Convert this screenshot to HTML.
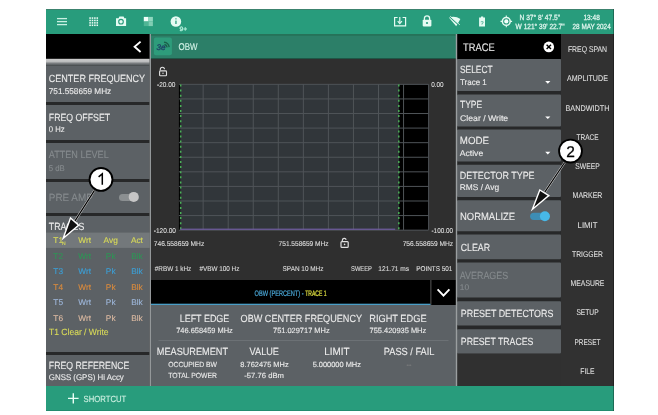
<!DOCTYPE html>
<html><head><meta charset="utf-8"><style>
html,body{margin:0;padding:0;background:#fff;width:658px;height:415px;overflow:hidden}
svg{display:block;will-change:transform}
text{font-family:"Liberation Sans", sans-serif;white-space:pre;text-rendering:geometricPrecision}
</style></head><body>
<svg width="658" height="415" viewBox="0 0 658 415">
<rect x="46" y="9" width="568" height="402" fill="#303030" />
<rect x="46" y="9" width="568" height="25" fill="#289c7c" />
<rect x="46" y="386" width="568" height="25" fill="#289c7c" />
<rect x="57" y="17.950000000000003" width="10" height="1.3" fill="#c9f0e2" />
<rect x="57" y="20.950000000000003" width="10" height="1.3" fill="#c9f0e2" />
<rect x="57" y="23.950000000000003" width="10" height="1.3" fill="#c9f0e2" />
<rect x="89.3" y="17.3" width="1.55" height="1.55" fill="#eefcf6" />
<rect x="89.3" y="19.7" width="1.55" height="1.55" fill="#eefcf6" />
<rect x="89.3" y="22.1" width="1.55" height="1.55" fill="#eefcf6" />
<rect x="89.3" y="24.5" width="1.55" height="1.55" fill="#eefcf6" />
<rect x="91.7" y="17.3" width="1.55" height="1.55" fill="#eefcf6" />
<rect x="91.7" y="19.7" width="1.55" height="1.55" fill="#eefcf6" />
<rect x="91.7" y="22.1" width="1.55" height="1.55" fill="#eefcf6" />
<rect x="91.7" y="24.5" width="1.55" height="1.55" fill="#eefcf6" />
<rect x="94.1" y="17.3" width="1.55" height="1.55" fill="#eefcf6" />
<rect x="94.1" y="19.7" width="1.55" height="1.55" fill="#eefcf6" />
<rect x="94.1" y="22.1" width="1.55" height="1.55" fill="#eefcf6" />
<rect x="94.1" y="24.5" width="1.55" height="1.55" fill="#eefcf6" />
<rect x="96.5" y="17.3" width="1.55" height="1.55" fill="#eefcf6" />
<rect x="96.5" y="19.7" width="1.55" height="1.55" fill="#eefcf6" />
<rect x="96.5" y="22.1" width="1.55" height="1.55" fill="#eefcf6" />
<rect x="96.5" y="24.5" width="1.55" height="1.55" fill="#eefcf6" />
<path d="M116,18.3 h2.6 l0.8,-1.8 h4.2 l0.8,1.8 h1.7 v7.8 h-10.1 z" fill="#e6fbf3"/>
<circle cx="121" cy="21.7" r="2.3" fill="none" stroke="#289c7c" stroke-width="1.1"/>
<rect x="143.8" y="16.9" width="4.7" height="4.6" fill="#f2fffa" />
<rect x="148.5" y="16.9" width="4.4" height="4.6" fill="#8fd8bf" />
<rect x="143.8" y="21.5" width="4.7" height="4.6" fill="#4fb594" />
<rect x="148.5" y="21.5" width="4.4" height="4.6" fill="#7fceb3" />
<circle cx="175.9" cy="21.5" r="5.3" fill="#e6fbf3"/>
<rect x="175.3" y="18.3" width="1.3" height="1.1" fill="#289c7c" />
<rect x="175.3" y="20.6" width="1.3" height="3.4" fill="#289c7c" />
<text x="179.6" y="30.9" font-size="6.3" fill="#b5efdc" text-anchor="start" textLength="7.6" lengthAdjust="spacingAndGlyphs" stroke="#b5efdc" stroke-width="0.3" >9+</text>
<path d="M397.6,17.5 h-3 v8.4 h11 v-8.4 h-3" fill="none" stroke="#e6fbf3" stroke-width="1.2"/>
<path d="M399.8,17 v5.8" stroke="#e6fbf3" stroke-width="1.2"/>
<path d="M397.7,21.2 l2.1,2.4 l2.1,-2.4" fill="none" stroke="#e6fbf3" stroke-width="1.2"/>
<path d="M424.4,20 v-1.6 a2.6,2.6 0 0 1 5.2,0 v1.6" fill="none" stroke="#e6fbf3" stroke-width="1.3"/>
<rect x="422.7" y="19.7" width="8.7" height="6.7" rx="0.8" fill="#e6fbf3"/>
<circle cx="427" cy="23" r="1.1" fill="#289c7c"/>
<path d="M448.8,17.6 Q454.8,15.2 460.4,19 L456.2,26.2 Z" fill="#e6fbf3"/>
<path d="M449.2,16.4 L459.4,25.6" stroke="#289c7c" stroke-width="1.1"/>
<path d="M450.2,16.2 L459.9,24.9" stroke="#e6fbf3" stroke-width="0.8"/>
<path d="M481,17.6 v-1.2 h2.2 v1.2 h1.8 v8.8 h-5.9 v-8.8 z" fill="#e6fbf3"/>
<text x="482" y="25" font-size="5.5" fill="#289c7c" text-anchor="middle" stroke="#289c7c" stroke-width="0.12" >?</text>
<circle cx="506.3" cy="21.4" r="3.9" fill="none" stroke="#e6fbf3" stroke-width="1.5"/>
<circle cx="506.3" cy="21.4" r="2.1" fill="#f4fffb"/>
<path d="M506.3,15.6 v1.8 M506.3,25.4 v1.8 M500.5,21.4 h1.8 M510.3,21.4 h1.8" stroke="#e6fbf3" stroke-width="1.1"/>
<text x="519.5" y="19.5" font-size="7.5" fill="#e3f7f0" text-anchor="start" textLength="40.6" lengthAdjust="spacingAndGlyphs" stroke="#e3f7f0" stroke-width="0.25" >N 37° 8' 47.5"</text>
<text x="515.6" y="29" font-size="7.5" fill="#e3f7f0" text-anchor="start" textLength="49" lengthAdjust="spacingAndGlyphs" stroke="#e3f7f0" stroke-width="0.25" >W 121° 39' 22.7"</text>
<text x="583.4" y="19.5" font-size="7.5" fill="#e3f7f0" text-anchor="start" textLength="16.4" lengthAdjust="spacingAndGlyphs" stroke="#e3f7f0" stroke-width="0.25" >13:48</text>
<text x="572.5" y="29" font-size="7.5" fill="#e3f7f0" text-anchor="start" textLength="38.2" lengthAdjust="spacingAndGlyphs" stroke="#e3f7f0" stroke-width="0.25" >28 MAY 2024</text>
<rect x="46" y="34" width="104" height="25" fill="#000" />
<path d="M140.6,41.6 L134.6,46.8 L140.6,52" fill="none" stroke="#fff" stroke-width="1.9"/>
<defs><linearGradient id="lg" x1="0" y1="0" x2="0" y2="1"><stop offset="0" stop-color="#cdcdcd"/><stop offset="0.4" stop-color="#bdbebf"/><stop offset="0.75" stop-color="#6a6e71"/><stop offset="1" stop-color="#53585b"/></linearGradient></defs>
<rect x="46" y="63" width="104" height="323" fill="#272829" />
<rect x="46" y="58.8" width="103.6" height="6.8" fill="url(#lg)" />
<rect x="46" y="65.6" width="103.5" height="36.400000000000006" fill="#5c6165" />
<rect x="46" y="105" width="103.5" height="35" fill="#5c6165" />
<rect x="46" y="143" width="103.5" height="36" fill="#5c6165" />
<rect x="46" y="182" width="103.5" height="31" fill="#5c6165" />
<rect x="46" y="216" width="103.5" height="136" fill="#5c6165" />
<rect x="46" y="355" width="103.5" height="31" fill="#5c6165" />
<text x="48.8" y="82.1" font-size="10.4" fill="#ebebeb" text-anchor="start" textLength="96.3" lengthAdjust="spacingAndGlyphs" stroke="#ebebeb" stroke-width="0.12" >CENTER FREQUENCY</text>
<text x="48.8" y="93.7" font-size="8.3" fill="#ebebeb" text-anchor="start" textLength="62.4" lengthAdjust="spacingAndGlyphs" stroke="#ebebeb" stroke-width="0.12" >751.558659 MHz</text>
<text x="48.8" y="120.8" font-size="10.4" fill="#ebebeb" text-anchor="start" textLength="61.3" lengthAdjust="spacingAndGlyphs" stroke="#ebebeb" stroke-width="0.12" >FREQ OFFSET</text>
<text x="48.8" y="131.8" font-size="8.3" fill="#ebebeb" text-anchor="start" textLength="15.8" lengthAdjust="spacingAndGlyphs" stroke="#ebebeb" stroke-width="0.12" >0 Hz</text>
<text x="48.8" y="158.4" font-size="10.4" fill="#858a8d" text-anchor="start" textLength="59.9" lengthAdjust="spacingAndGlyphs" stroke="#858a8d" stroke-width="0.12" >ATTEN LEVEL</text>
<text x="48.8" y="170.8" font-size="8.3" fill="#858a8d" text-anchor="start" textLength="16" lengthAdjust="spacingAndGlyphs" stroke="#858a8d" stroke-width="0.12" >5 dB</text>
<text x="48.8" y="200.6" font-size="10.4" fill="#858a8d" text-anchor="start" textLength="44" lengthAdjust="spacingAndGlyphs" stroke="#858a8d" stroke-width="0.12" >PRE AMP</text>
<rect x="119" y="193.9" width="19.8" height="7.2" rx="3.6" fill="#8b8f91"/>
<circle cx="133.7" cy="196.9" r="5" fill="#c6c6c6"/>
<text x="48.8" y="229.5" font-size="10.4" fill="#ebebeb" text-anchor="start" textLength="35.5" lengthAdjust="spacingAndGlyphs" stroke="#ebebeb" stroke-width="0.12" >TRACES</text>
<rect x="46" y="232.6" width="103.5" height="15.3" fill="#73787b" />
<text x="58.2" y="242.9" font-size="8.3" fill="#d8da58" text-anchor="middle" stroke="#d8da58" stroke-width="0.12" >T1</text>
<text x="84.7" y="242.9" font-size="8.3" fill="#d8da58" text-anchor="middle" stroke="#d8da58" stroke-width="0.12" >Wrt</text>
<text x="110.7" y="242.9" font-size="8.3" fill="#d8da58" text-anchor="middle" stroke="#d8da58" stroke-width="0.12" >Avg</text>
<text x="136.9" y="242.9" font-size="8.3" fill="#d8da58" text-anchor="middle" stroke="#d8da58" stroke-width="0.12" >Act</text>
<text x="58.2" y="258.5" font-size="8.3" fill="#2f9556" text-anchor="middle" stroke="#2f9556" stroke-width="0.12" >T2</text>
<text x="84.7" y="258.5" font-size="8.3" fill="#2f9556" text-anchor="middle" stroke="#2f9556" stroke-width="0.12" >Wrt</text>
<text x="110.7" y="258.5" font-size="8.3" fill="#2f9556" text-anchor="middle" stroke="#2f9556" stroke-width="0.12" >Pk</text>
<text x="136.9" y="258.5" font-size="8.3" fill="#2f9556" text-anchor="middle" stroke="#2f9556" stroke-width="0.12" >Blk</text>
<text x="58.2" y="274" font-size="8.3" fill="#3c9fd6" text-anchor="middle" stroke="#3c9fd6" stroke-width="0.12" >T3</text>
<text x="84.7" y="274" font-size="8.3" fill="#3c9fd6" text-anchor="middle" stroke="#3c9fd6" stroke-width="0.12" >Wrt</text>
<text x="110.7" y="274" font-size="8.3" fill="#3c9fd6" text-anchor="middle" stroke="#3c9fd6" stroke-width="0.12" >Pk</text>
<text x="136.9" y="274" font-size="8.3" fill="#3c9fd6" text-anchor="middle" stroke="#3c9fd6" stroke-width="0.12" >Blk</text>
<text x="58.2" y="289.7" font-size="8.3" fill="#db8b3d" text-anchor="middle" stroke="#db8b3d" stroke-width="0.12" >T4</text>
<text x="84.7" y="289.7" font-size="8.3" fill="#db8b3d" text-anchor="middle" stroke="#db8b3d" stroke-width="0.12" >Wrt</text>
<text x="110.7" y="289.7" font-size="8.3" fill="#db8b3d" text-anchor="middle" stroke="#db8b3d" stroke-width="0.12" >Pk</text>
<text x="136.9" y="289.7" font-size="8.3" fill="#db8b3d" text-anchor="middle" stroke="#db8b3d" stroke-width="0.12" >Blk</text>
<text x="58.2" y="305.4" font-size="8.3" fill="#9db6d9" text-anchor="middle" stroke="#9db6d9" stroke-width="0.12" >T5</text>
<text x="84.7" y="305.4" font-size="8.3" fill="#9db6d9" text-anchor="middle" stroke="#9db6d9" stroke-width="0.12" >Wrt</text>
<text x="110.7" y="305.4" font-size="8.3" fill="#9db6d9" text-anchor="middle" stroke="#9db6d9" stroke-width="0.12" >Pk</text>
<text x="136.9" y="305.4" font-size="8.3" fill="#9db6d9" text-anchor="middle" stroke="#9db6d9" stroke-width="0.12" >Blk</text>
<text x="58.2" y="320.7" font-size="8.3" fill="#dbb9a1" text-anchor="middle" stroke="#dbb9a1" stroke-width="0.12" >T6</text>
<text x="84.7" y="320.7" font-size="8.3" fill="#dbb9a1" text-anchor="middle" stroke="#dbb9a1" stroke-width="0.12" >Wrt</text>
<text x="110.7" y="320.7" font-size="8.3" fill="#dbb9a1" text-anchor="middle" stroke="#dbb9a1" stroke-width="0.12" >Pk</text>
<text x="136.9" y="320.7" font-size="8.3" fill="#dbb9a1" text-anchor="middle" stroke="#dbb9a1" stroke-width="0.12" >Blk</text>
<text x="61.9" y="244.9" font-size="5" fill="#d8da58" text-anchor="start" stroke="#d8da58" stroke-width="0.12" >N</text>
<text x="49" y="334.5" font-size="9" fill="#d8da58" text-anchor="start" textLength="59.6" lengthAdjust="spacingAndGlyphs" stroke="#d8da58" stroke-width="0.12" >T1 Clear / Write</text>
<text x="48.8" y="368.5" font-size="10.4" fill="#ebebeb" text-anchor="start" textLength="80.6" lengthAdjust="spacingAndGlyphs" stroke="#ebebeb" stroke-width="0.12" >FREQ REFERENCE</text>
<text x="48.8" y="380.1" font-size="8.3" fill="#ebebeb" text-anchor="start" textLength="75" lengthAdjust="spacingAndGlyphs" stroke="#ebebeb" stroke-width="0.12" >GNSS (GPS) Hi Accy</text>
<rect x="151" y="34" width="305.5" height="25" fill="#2c7f68" />
<rect x="151" y="34" width="305.5" height="1.8" fill="#267259" />
<rect x="151" y="58" width="305.5" height="1.8" fill="#1f5646" />
<rect x="153.9" y="37.6" width="18" height="17.7" rx="2" fill="#2e9c7b"/>
<text x="156.4" y="50.4" font-size="8.2" fill="#1f3f66" text-anchor="start" textLength="9" lengthAdjust="spacingAndGlyphs" stroke="#1f3f66" stroke-width="0.3" font-style="italic">3e</text>
<path d="M164,42.2 a6,6 0 0 1 5.2,5 M164.4,44.5 a3.6,3.6 0 0 1 2.8,2.8" fill="none" stroke="#1b5e4a" stroke-width="1.3"/>
<text x="178.6" y="50.4" font-size="9.8" fill="#d5f3e8" text-anchor="start" textLength="19" lengthAdjust="spacingAndGlyphs" stroke="#d5f3e8" stroke-width="0.12" >OBW</text>
<rect x="151" y="59" width="305.5" height="221" fill="#2f2f2f" />
<path d="M160.3,70.3 v-1 a2.1,2.1 0 0 1 4.2,0" fill="none" stroke="#e0e0e0" stroke-width="1.1"/>
<rect x="159.6" y="70.9" width="6.9" height="4.8" rx="0.8" fill="none" stroke="#e0e0e0" stroke-width="1.1"/>
<circle cx="163" cy="73.3" r="0.7" fill="#e0e0e0"/>
<rect x="178.9" y="84.2" width="250" height="145.8" fill="#000" />
<rect x="180.2" y="84.2" width="219" height="145.8" fill="#31363a" />
<rect x="202.65" y="84.2" width="1.0" height="145.8" fill="#4f5458" />
<rect x="227.7" y="84.2" width="1.0" height="145.8" fill="#4f5458" />
<rect x="252.75" y="84.2" width="1.0" height="145.8" fill="#4f5458" />
<rect x="277.8" y="84.2" width="1.0" height="145.8" fill="#4f5458" />
<rect x="302.85" y="84.2" width="1.0" height="145.8" fill="#4f5458" />
<rect x="327.9" y="84.2" width="1.0" height="145.8" fill="#4f5458" />
<rect x="352.95" y="84.2" width="1.0" height="145.8" fill="#4f5458" />
<rect x="378.0" y="84.2" width="1.0" height="145.8" fill="#4f5458" />
<rect x="403.05" y="84.2" width="1.0" height="145.8" fill="#4f5458" />
<rect x="428.1" y="84.2" width="1.0" height="145.8" fill="#4f5458" />
<rect x="178.9" y="83.85" width="249.6" height="1.0" fill="#4f5458" />
<rect x="178.9" y="98.43" width="249.6" height="1.0" fill="#4f5458" />
<rect x="178.9" y="113.01" width="249.6" height="1.0" fill="#4f5458" />
<rect x="178.9" y="127.59" width="249.6" height="1.0" fill="#4f5458" />
<rect x="178.9" y="142.17" width="249.6" height="1.0" fill="#4f5458" />
<rect x="178.9" y="156.75" width="249.6" height="1.0" fill="#4f5458" />
<rect x="178.9" y="171.33" width="249.6" height="1.0" fill="#4f5458" />
<rect x="178.9" y="185.91" width="249.6" height="1.0" fill="#4f5458" />
<rect x="178.9" y="200.49" width="249.6" height="1.0" fill="#4f5458" />
<rect x="178.9" y="215.07" width="249.6" height="1.0" fill="#4f5458" />
<rect x="178.9" y="229.65" width="249.6" height="1.0" fill="#4f5458" />
<line x1="180.7" y1="84.5" x2="180.7" y2="230" stroke="#4bb157" stroke-width="1.5" stroke-dasharray="2,3.1"/>
<line x1="398.8" y1="84.5" x2="398.8" y2="230" stroke="#4bb157" stroke-width="1.5" stroke-dasharray="2,3.1"/>
<rect x="180.2" y="228.6" width="215" height="1.3" fill="#6d5b9c" />
<text x="157" y="86.75" font-size="7" fill="#dcdcdc" text-anchor="start" textLength="18.4" lengthAdjust="spacingAndGlyphs" stroke="#dcdcdc" stroke-width="0.12" >-20.00</text>
<text x="431.2" y="87" font-size="7" fill="#dcdcdc" text-anchor="start" textLength="12.5" lengthAdjust="spacingAndGlyphs" stroke="#dcdcdc" stroke-width="0.12" >0.00</text>
<text x="153.8" y="232.8" font-size="7" fill="#dcdcdc" text-anchor="start" textLength="22.2" lengthAdjust="spacingAndGlyphs" stroke="#dcdcdc" stroke-width="0.12" >-120.00</text>
<text x="431.5" y="232.6" font-size="7" fill="#dcdcdc" text-anchor="start" textLength="21.6" lengthAdjust="spacingAndGlyphs" stroke="#dcdcdc" stroke-width="0.12" >-100.00</text>
<text x="153.8" y="245.6" font-size="7" fill="#dcdcdc" text-anchor="start" textLength="50.4" lengthAdjust="spacingAndGlyphs" stroke="#dcdcdc" stroke-width="0.12" >746.558659 MHz</text>
<text x="278.6" y="245.7" font-size="7" fill="#dcdcdc" text-anchor="start" textLength="50" lengthAdjust="spacingAndGlyphs" stroke="#dcdcdc" stroke-width="0.12" >751.558659 MHz</text>
<text x="402.7" y="245.7" font-size="7" fill="#dcdcdc" text-anchor="start" textLength="50.5" lengthAdjust="spacingAndGlyphs" stroke="#dcdcdc" stroke-width="0.12" >756.558659 MHz</text>
<path d="M342.3,241.6 v-1.2 a2,2 0 0 1 3.9,-0.6" fill="none" stroke="#e0e0e0" stroke-width="1.2"/>
<rect x="341" y="241.7" width="7.2" height="5.6" rx="0.9" fill="none" stroke="#e0e0e0" stroke-width="1.2"/>
<circle cx="344.6" cy="244.4" r="0.8" fill="#e0e0e0"/>
<text x="154.8" y="270.5" font-size="7" fill="#dcdcdc" text-anchor="start" textLength="36.4" lengthAdjust="spacingAndGlyphs" stroke="#dcdcdc" stroke-width="0.12" >#RBW 1 kHz</text>
<text x="199.4" y="270.5" font-size="7" fill="#dcdcdc" text-anchor="start" textLength="40" lengthAdjust="spacingAndGlyphs" stroke="#dcdcdc" stroke-width="0.12" >#VBW 100 Hz</text>
<text x="282.6" y="270.6" font-size="7" fill="#dcdcdc" text-anchor="start" textLength="40.8" lengthAdjust="spacingAndGlyphs" stroke="#dcdcdc" stroke-width="0.12" >SPAN 10 MHz</text>
<text x="351" y="270.6" font-size="7" fill="#dcdcdc" text-anchor="start" textLength="21" lengthAdjust="spacingAndGlyphs" stroke="#dcdcdc" stroke-width="0.12" >SWEEP</text>
<text x="378.3" y="270.6" font-size="7" fill="#dcdcdc" text-anchor="start" textLength="30.8" lengthAdjust="spacingAndGlyphs" stroke="#dcdcdc" stroke-width="0.12" >121.71 ms</text>
<text x="416.3" y="270.6" font-size="7" fill="#dcdcdc" text-anchor="start" textLength="36" lengthAdjust="spacingAndGlyphs" stroke="#dcdcdc" stroke-width="0.12" >POINTS 501</text>
<rect x="151" y="280" width="279.5" height="24" fill="#000" />
<rect x="151" y="303.7" width="279.5" height="1.4" fill="#4a9ec6" />
<rect x="430.5" y="280" width="1" height="24" fill="#555" />
<rect x="431.5" y="280" width="25" height="25" fill="#000" />
<path d="M437.6,289.4 L443.5,295.6 L449.4,289.4" fill="none" stroke="#fff" stroke-width="1.9"/>
<text x="254.6" y="296.1" font-size="8" fill="#4aa8d8" text-anchor="start" textLength="50.5" lengthAdjust="spacingAndGlyphs" stroke="#4aa8d8" stroke-width="0.22" >OBW (PERCENT) - </text>
<text x="305.2" y="296.1" font-size="8" fill="#e0e040" text-anchor="start" textLength="21.3" lengthAdjust="spacingAndGlyphs" stroke="#e0e040" stroke-width="0.22" >TRACE 1</text>
<rect x="151" y="305" width="305.5" height="81" fill="#5c6165" />
<text x="204.5" y="321.7" font-size="10.4" fill="#ebebeb" text-anchor="middle" textLength="49.6" lengthAdjust="spacingAndGlyphs" stroke="#ebebeb" stroke-width="0.12" >LEFT EDGE</text>
<text x="204.5" y="333.4" font-size="7.5" fill="#ebebeb" text-anchor="middle" textLength="56.6" lengthAdjust="spacingAndGlyphs" stroke="#ebebeb" stroke-width="0.12" >746.658459 MHz</text>
<text x="301.3" y="321.7" font-size="10.4" fill="#ebebeb" text-anchor="middle" textLength="121.5" lengthAdjust="spacingAndGlyphs" stroke="#ebebeb" stroke-width="0.12" >OBW CENTER FREQUENCY</text>
<text x="301.3" y="333.4" font-size="7.5" fill="#ebebeb" text-anchor="middle" textLength="56.6" lengthAdjust="spacingAndGlyphs" stroke="#ebebeb" stroke-width="0.12" >751.029717 MHz</text>
<text x="397.9" y="321.7" font-size="10.4" fill="#ebebeb" text-anchor="middle" textLength="57.3" lengthAdjust="spacingAndGlyphs" stroke="#ebebeb" stroke-width="0.12" >RIGHT EDGE</text>
<text x="397.9" y="333.4" font-size="7.5" fill="#ebebeb" text-anchor="middle" textLength="56.6" lengthAdjust="spacingAndGlyphs" stroke="#ebebeb" stroke-width="0.12" >755.420935 MHz</text>
<rect x="158.5" y="340" width="290" height="0.8" fill="#71767a" />
<text x="156.8" y="355.2" font-size="10.4" fill="#ebebeb" text-anchor="start" textLength="71.2" lengthAdjust="spacingAndGlyphs" stroke="#ebebeb" stroke-width="0.12" >MEASUREMENT</text>
<text x="264.3" y="355.2" font-size="10.4" fill="#ebebeb" text-anchor="middle" textLength="29.4" lengthAdjust="spacingAndGlyphs" stroke="#ebebeb" stroke-width="0.12" >VALUE</text>
<text x="336.9" y="355.2" font-size="10.4" fill="#ebebeb" text-anchor="middle" textLength="25.3" lengthAdjust="spacingAndGlyphs" stroke="#ebebeb" stroke-width="0.12" >LIMIT</text>
<text x="409.1" y="355.2" font-size="10.4" fill="#ebebeb" text-anchor="middle" textLength="50.6" lengthAdjust="spacingAndGlyphs" stroke="#ebebeb" stroke-width="0.12" >PASS / FAIL</text>
<text x="192.6" y="367.1" font-size="7.4" fill="#ebebeb" text-anchor="middle" textLength="48.9" lengthAdjust="spacingAndGlyphs" stroke="#ebebeb" stroke-width="0.12" >OCCUPIED BW</text>
<text x="192.6" y="377.6" font-size="7.4" fill="#ebebeb" text-anchor="middle" textLength="48.6" lengthAdjust="spacingAndGlyphs" stroke="#ebebeb" stroke-width="0.12" >TOTAL POWER</text>
<text x="264.5" y="367.1" font-size="7.4" fill="#ebebeb" text-anchor="middle" textLength="48.3" lengthAdjust="spacingAndGlyphs" stroke="#ebebeb" stroke-width="0.12" >8.762475 MHz</text>
<text x="264.1" y="377.6" font-size="7.4" fill="#ebebeb" text-anchor="middle" textLength="39.6" lengthAdjust="spacingAndGlyphs" stroke="#ebebeb" stroke-width="0.12" >-57.76 dBm</text>
<text x="336.8" y="367.1" font-size="7.4" fill="#ebebeb" text-anchor="middle" textLength="48.3" lengthAdjust="spacingAndGlyphs" stroke="#ebebeb" stroke-width="0.12" >5.000000 MHz</text>
<text x="409" y="367.1" font-size="7.4" fill="#888" text-anchor="middle" stroke="#888" stroke-width="0.12" >--</text>
<rect x="457" y="34" width="104" height="25" fill="#000" />
<text x="463" y="51" font-size="11" fill="#ebebeb" text-anchor="start" textLength="31.6" lengthAdjust="spacingAndGlyphs" stroke="#ebebeb" stroke-width="0.12" >TRACE</text>
<circle cx="548.8" cy="46.9" r="5.3" fill="#fff"/>
<path d="M546.6,44.7 L551,49.1 M551,44.7 L546.6,49.1" stroke="#000" stroke-width="1.4"/>
<rect x="457" y="59" width="104" height="294.6" fill="#272829" />
<rect x="457" y="59" width="104" height="32" rx="1" fill="#5c6165"/>
<rect x="457" y="94.5" width="104" height="32.0" rx="1" fill="#5c6165"/>
<rect x="457" y="129.5" width="104" height="32.0" rx="1" fill="#5c6165"/>
<rect x="457" y="164.7" width="104" height="32.30000000000001" rx="1" fill="#5c6165"/>
<rect x="457" y="200.2" width="104" height="31.100000000000023" rx="1" fill="#5c6165"/>
<rect x="457" y="234.5" width="104" height="24.69999999999999" rx="1" fill="#5c6165"/>
<rect x="457" y="262.6" width="104" height="35.0" rx="1" fill="#5c6165"/>
<rect x="457" y="301.3" width="104" height="24.30000000000001" rx="1" fill="#5c6165"/>
<rect x="457" y="329.2" width="104" height="24.400000000000034" rx="1" fill="#5c6165"/>
<text x="460" y="73.2" font-size="10.4" fill="#ebebeb" text-anchor="start" textLength="32.6" lengthAdjust="spacingAndGlyphs" stroke="#ebebeb" stroke-width="0.12" >SELECT</text>
<text x="460" y="85.3" font-size="8.3" fill="#ebebeb" text-anchor="start" textLength="26.8" lengthAdjust="spacingAndGlyphs" stroke="#ebebeb" stroke-width="0.12" >Trace 1</text>
<text x="460" y="108.1" font-size="10.4" fill="#ebebeb" text-anchor="start" textLength="22.2" lengthAdjust="spacingAndGlyphs" stroke="#ebebeb" stroke-width="0.12" >TYPE</text>
<text x="460" y="120.7" font-size="8.3" fill="#ebebeb" text-anchor="start" textLength="48.2" lengthAdjust="spacingAndGlyphs" stroke="#ebebeb" stroke-width="0.12" >Clear / Write</text>
<text x="459.8" y="143.5" font-size="10.4" fill="#ebebeb" text-anchor="start" textLength="29.2" lengthAdjust="spacingAndGlyphs" stroke="#ebebeb" stroke-width="0.12" >MODE</text>
<text x="459.8" y="156" font-size="8.3" fill="#ebebeb" text-anchor="start" textLength="23.4" lengthAdjust="spacingAndGlyphs" stroke="#ebebeb" stroke-width="0.12" >Active</text>
<text x="459.8" y="178.8" font-size="10.4" fill="#ebebeb" text-anchor="start" textLength="74.8" lengthAdjust="spacingAndGlyphs" stroke="#ebebeb" stroke-width="0.12" >DETECTOR TYPE</text>
<text x="459.8" y="190.3" font-size="8.3" fill="#ebebeb" text-anchor="start" textLength="39.3" lengthAdjust="spacingAndGlyphs" stroke="#ebebeb" stroke-width="0.12" >RMS / Avg</text>
<path d="M545.2,81.1 h5.2 l-2.6,2.6 z" fill="#fff"/>
<path d="M545.2,116.4 h5.2 l-2.6,2.6 z" fill="#fff"/>
<path d="M545.2,151.8 h5.2 l-2.6,2.6 z" fill="#fff"/>
<text x="460" y="219.8" font-size="10.4" fill="#ebebeb" text-anchor="start" textLength="55.1" lengthAdjust="spacingAndGlyphs" stroke="#ebebeb" stroke-width="0.12" >NORMALIZE</text>
<rect x="530.1" y="212.7" width="19.4" height="7.3" rx="3.65" fill="#3d8db5"/>
<circle cx="544.9" cy="216.2" r="5" fill="#47b8e8"/>
<text x="460.7" y="251" font-size="10.4" fill="#ebebeb" text-anchor="start" textLength="29.4" lengthAdjust="spacingAndGlyphs" stroke="#ebebeb" stroke-width="0.12" >CLEAR</text>
<text x="459.8" y="278.5" font-size="10.4" fill="#858a8d" text-anchor="start" textLength="48.4" lengthAdjust="spacingAndGlyphs" stroke="#858a8d" stroke-width="0.12" >AVERAGES</text>
<text x="459.8" y="290" font-size="8.3" fill="#858a8d" text-anchor="start" textLength="9.3" lengthAdjust="spacingAndGlyphs" stroke="#858a8d" stroke-width="0.12" >10</text>
<text x="460.8" y="317" font-size="10.4" fill="#ebebeb" text-anchor="start" textLength="92.6" lengthAdjust="spacingAndGlyphs" stroke="#ebebeb" stroke-width="0.12" >PRESET DETECTORS</text>
<text x="460.8" y="344.7" font-size="10.4" fill="#ebebeb" text-anchor="start" textLength="72.6" lengthAdjust="spacingAndGlyphs" stroke="#ebebeb" stroke-width="0.12" >PRESET TRACES</text>
<rect x="561" y="34" width="53" height="352" fill="#313131" />
<text x="587.5" y="52.4" font-size="8.3" fill="#e4e4e4" text-anchor="middle" textLength="39.2" lengthAdjust="spacingAndGlyphs" stroke="#e4e4e4" stroke-width="0.05" >FREQ SPAN</text>
<text x="587.5" y="81.3" font-size="8.3" fill="#e4e4e4" text-anchor="middle" textLength="40.800000000000004" lengthAdjust="spacingAndGlyphs" stroke="#e4e4e4" stroke-width="0.05" >AMPLITUDE</text>
<text x="587.5" y="110.9" font-size="8.3" fill="#e4e4e4" text-anchor="middle" textLength="44.0" lengthAdjust="spacingAndGlyphs" stroke="#e4e4e4" stroke-width="0.05" >BANDWIDTH</text>
<text x="587.5" y="139.6" font-size="8.3" fill="#e4e4e4" text-anchor="middle" textLength="22.0" lengthAdjust="spacingAndGlyphs" stroke="#e4e4e4" stroke-width="0.05" >TRACE</text>
<text x="587.5" y="169.2" font-size="8.3" fill="#e4e4e4" text-anchor="middle" textLength="24.3" lengthAdjust="spacingAndGlyphs" stroke="#e4e4e4" stroke-width="0.05" >SWEEP</text>
<text x="587.5" y="198.4" font-size="8.3" fill="#e4e4e4" text-anchor="middle" textLength="29.8" lengthAdjust="spacingAndGlyphs" stroke="#e4e4e4" stroke-width="0.05" >MARKER</text>
<text x="587.5" y="227.8" font-size="8.3" fill="#e4e4e4" text-anchor="middle" textLength="19.8" lengthAdjust="spacingAndGlyphs" stroke="#e4e4e4" stroke-width="0.05" >LIMIT</text>
<text x="587.5" y="257" font-size="8.3" fill="#e4e4e4" text-anchor="middle" textLength="30.8" lengthAdjust="spacingAndGlyphs" stroke="#e4e4e4" stroke-width="0.05" >TRIGGER</text>
<text x="587.5" y="286.2" font-size="8.3" fill="#e4e4e4" text-anchor="middle" textLength="33.800000000000004" lengthAdjust="spacingAndGlyphs" stroke="#e4e4e4" stroke-width="0.05" >MEASURE</text>
<text x="587.5" y="315.1" font-size="8.3" fill="#e4e4e4" text-anchor="middle" textLength="22.200000000000003" lengthAdjust="spacingAndGlyphs" stroke="#e4e4e4" stroke-width="0.05" >SETUP</text>
<text x="587.5" y="344.8" font-size="8.3" fill="#e4e4e4" text-anchor="middle" textLength="25.900000000000002" lengthAdjust="spacingAndGlyphs" stroke="#e4e4e4" stroke-width="0.05" >PRESET</text>
<text x="587.5" y="374.1" font-size="8.3" fill="#e4e4e4" text-anchor="middle" textLength="14.299999999999999" lengthAdjust="spacingAndGlyphs" stroke="#e4e4e4" stroke-width="0.05" >FILE</text>
<rect x="149.6" y="34" width="1.4" height="352" fill="#94989a" />
<rect x="455.8" y="34" width="1.4" height="352" fill="#9a9ea0" />
<path d="M73.3,393.3 v10.2 M68,398.4 h10.6" stroke="#eafff6" stroke-width="1.4"/>
<text x="83.6" y="401.7" font-size="9" fill="#cff1e3" text-anchor="start" textLength="42.6" lengthAdjust="spacingAndGlyphs" stroke="#cff1e3" stroke-width="0.12" >SHORTCUT</text>
<rect x="46" y="9" width="568" height="0.9" fill="#3f7f6c" />
<rect x="613.1" y="9" width="0.9" height="402" fill="rgba(0,0,0,0.35)" />
<rect x="46" y="410.1" width="568" height="0.9" fill="rgba(0,0,0,0.12)" />
<line x1="94.5" y1="190.3" x2="74.55" y2="221.6" stroke="#e8e8e8" stroke-width="2.1"/>
<line x1="94.5" y1="190.3" x2="74.55" y2="221.6" stroke="#000" stroke-width="1.25"/>
<path d="M63.2,238.3 L70.5,218 L78.6,225.2 Z" fill="#111" stroke="#fff" stroke-width="1.4" stroke-linejoin="miter"/>
<circle cx="101" cy="179.4" r="11.45" fill="#fff" stroke="#000" stroke-width="1.85"/>
<path d="M98.6,176.8 L102.3,173.8 V184.8" fill="none" stroke="#000" stroke-width="1.5"/>
<line x1="564.7" y1="162.5" x2="544.3" y2="192.8" stroke="#e8e8e8" stroke-width="2.1"/>
<line x1="564.7" y1="162.5" x2="544.3" y2="192.8" stroke="#000" stroke-width="1.25"/>
<path d="M532.4,209.2 L539.8,190 L548.8,195.6 Z" fill="#111" stroke="#fff" stroke-width="1.4" stroke-linejoin="miter"/>
<circle cx="570.5" cy="151" r="11.45" fill="#fff" stroke="#000" stroke-width="1.85"/>
<text x="570.5" y="156.6" font-size="15.5" fill="#000" text-anchor="middle" stroke="#000" stroke-width="0.3" >2</text>
</svg>
</body></html>
